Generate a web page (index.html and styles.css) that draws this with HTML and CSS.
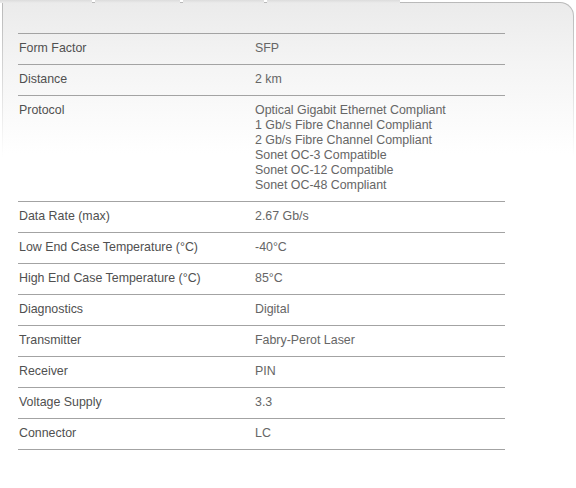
FILE: index.html
```html
<!DOCTYPE html>
<html>
<head>
<meta charset="utf-8">
<link rel="stylesheet" href="styles.css">
</head>
<body>
<div class="wrap">
  <div class="tabs">
    <div class="tab tab-1"></div>
    <div class="tab tab-2"></div>
    <div class="tab tab-3"></div>
    <div class="tab tab-4"></div>
  </div>
  <div class="frame">
    <div class="panel">
      <div class="specs">
        <div class="row"><div class="label">Form Factor</div><div class="value">SFP</div></div>
        <div class="row"><div class="label">Distance</div><div class="value">2 km</div></div>
        <div class="row"><div class="label">Protocol</div><div class="value">Optical Gigabit Ethernet Compliant<br>1 Gb/s Fibre Channel Compliant<br>2 Gb/s Fibre Channel Compliant<br>Sonet OC-3 Compatible<br>Sonet OC-12 Compatible<br>Sonet OC-48 Compliant</div></div>
        <div class="row"><div class="label">Data Rate (max)</div><div class="value">2.67 Gb/s</div></div>
        <div class="row"><div class="label">Low End Case Temperature (°C)</div><div class="value">-40°C</div></div>
        <div class="row"><div class="label">High End Case Temperature (°C)</div><div class="value">85°C</div></div>
        <div class="row"><div class="label">Diagnostics</div><div class="value">Digital</div></div>
        <div class="row"><div class="label">Transmitter</div><div class="value">Fabry-Perot Laser</div></div>
        <div class="row"><div class="label">Receiver</div><div class="value">PIN</div></div>
        <div class="row"><div class="label">Voltage Supply</div><div class="value">3.3</div></div>
        <div class="row"><div class="label">Connector</div><div class="value">LC</div></div>
      </div>
    </div>
  </div>
</div>
</body>
</html>
```

FILE: styles.css
```css
html, body {
  margin: 0;
  padding: 0;
  background: #ffffff;
}

body {
  font-family: "Liberation Sans", Arial, sans-serif;
  font-size: 12.4px;
  line-height: 15px;
  width: 576px;
  height: 488px;
  overflow: hidden;
}

.wrap {
  width: 576px;
}

.tabs {
  display: flex;
  gap: 3px;
  height: 3px;
  position: relative;
  z-index: 1;
  margin-bottom: -1px;
}

.tab {
  height: 3px;
  background: linear-gradient(#dcdcdc, #ebebeb);
}

.tab-1 { width: 92px; }
.tab-2 { width: 85px; }
.tab-3 { width: 81px; }
.tab-4 { width: 133px; }

.frame {
  margin-left: 2px;
  width: 570px;
  padding: 1px 1px 0 1px;
  border-radius: 0 14px 0 0;
  background: linear-gradient(#b9b9b9 0, #c8c8c8 40px, #ffffff 155px);
}

.panel {
  border-radius: 0 13px 0 0;
  background: linear-gradient(#ebebeb 0, #f4f4f4 60px, #ffffff 150px);
  padding: 30px 0 37px 15px;
}

.specs {
  width: 487px;
  border-bottom: 1px solid #a3a3a3;
}

.row {
  display: grid;
  grid-template-columns: 236px 1fr;
  border-top: 1px solid #a3a3a3;
  padding: 7px 0 8px 1px;
}

.label {
  color: #505050;
}

.value {
  color: #666666;
}
```
